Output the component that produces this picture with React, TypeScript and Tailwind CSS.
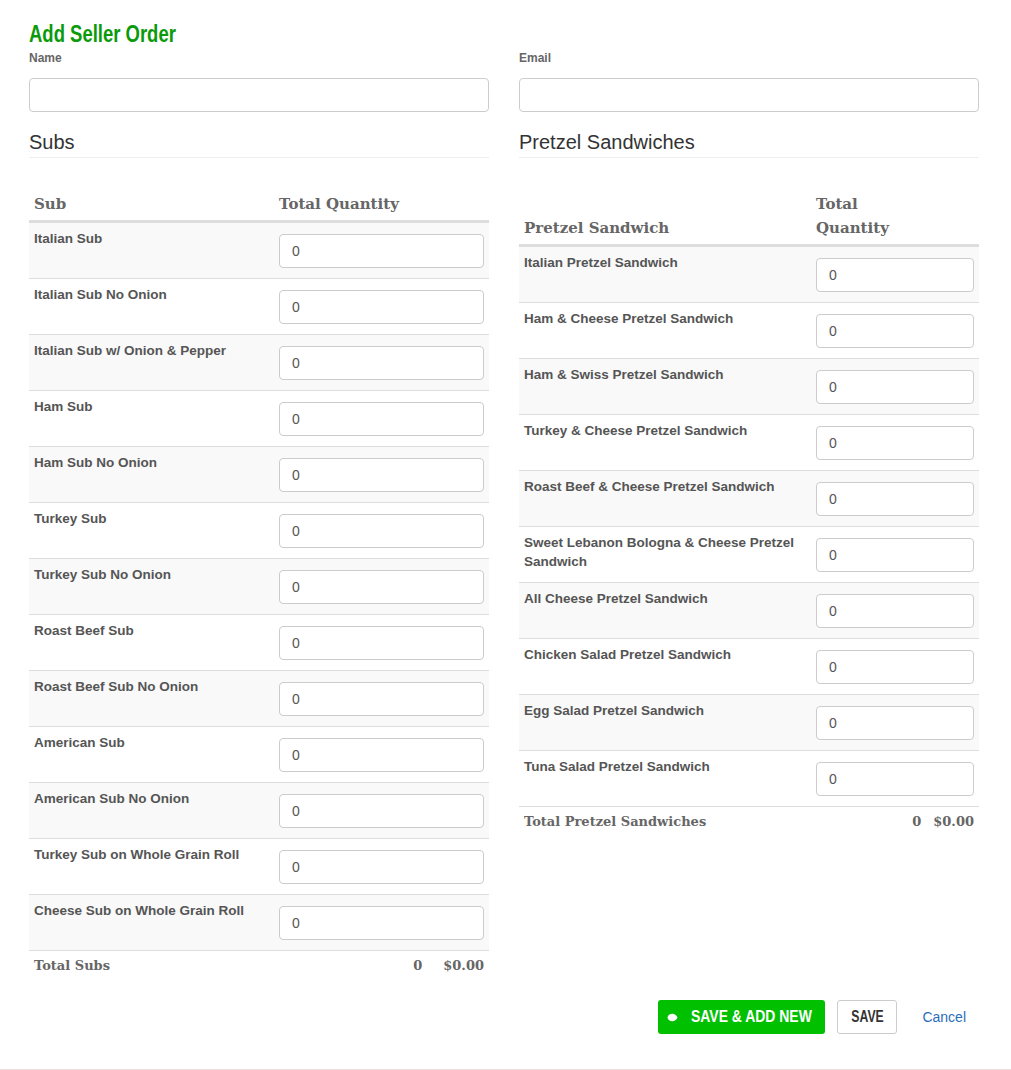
import React from 'react';

const subs = [
  'Italian Sub',
  'Italian Sub No Onion',
  'Italian Sub w/ Onion & Pepper',
  'Ham Sub',
  'Ham Sub No Onion',
  'Turkey Sub',
  'Turkey Sub No Onion',
  'Roast Beef Sub',
  'Roast Beef Sub No Onion',
  'American Sub',
  'American Sub No Onion',
  'Turkey Sub on Whole Grain Roll',
  'Cheese Sub on Whole Grain Roll',
];

const pretzels = [
  'Italian Pretzel Sandwich',
  'Ham & Cheese Pretzel Sandwich',
  'Ham & Swiss Pretzel Sandwich',
  'Turkey & Cheese Pretzel Sandwich',
  'Roast Beef & Cheese Pretzel Sandwich',
  'Sweet Lebanon Bologna & Cheese Pretzel Sandwich',
  'All Cheese Pretzel Sandwich',
  'Chicken Salad Pretzel Sandwich',
  'Egg Salad Pretzel Sandwich',
  'Tuna Salad Pretzel Sandwich',
];

const serif = 'font-["Georgia","DejaVu_Serif",serif]';

function Row({ name, odd, firstCol }: { name: string; odd: boolean; firstCol: string }) {
  return (
    <div className={`flex h-[56px] border-t border-[#ddd] ${odd ? 'bg-[#f9f9f9]' : 'bg-white'}`}>
      <div className={`${firstCol} px-[5px] pt-[6px] text-[13.5px] font-bold leading-[19px] text-[#555]`}>{name}</div>
      <div className="flex flex-1 items-center px-[5px]">
        <input
          defaultValue="0"
          className="h-[34px] w-full rounded-[4px] border border-[#ccc] bg-white px-3 text-[14px] text-[#555] outline-none"
        />
      </div>
    </div>
  );
}

function Field({ label }: { label: string }) {
  return (
    <div className="flex flex-col">
      <label className="mb-[12px] text-[12px] font-bold leading-[16px] text-[#666]">{label}</label>
      <input className="h-[34px] w-full rounded-[4px] border border-[#ccc] bg-white px-3 outline-none" />
    </div>
  );
}

export default function App() {
  return (
    <div className="min-h-[1070px] bg-white font-['Liberation_Sans',Arial,sans-serif]">
      <div className="mx-[29px] w-[950px] pt-[20px]">
        <h1 className="inline-block origin-left scale-x-[0.77] whitespace-nowrap text-[24px] font-bold leading-[28px] text-[#0a9a0a]">
          Add Seller Order
        </h1>
        <div className="mt-[1px] grid grid-cols-2 gap-[30px]">
          {/* left column */}
          <div className="flex flex-col">
            <Field label="Name" />
            <h2 className="mt-[18px] border-b border-[#eee] pb-[3px] text-[20px] leading-[24px] text-[#333]">Subs</h2>
            <div className="mt-[34px]">
              <div className={`flex items-end border-b-2 border-[#ddd] pb-[4px] ${serif} text-[15px] font-bold leading-[24px] text-[#666]`}>
                <div className="w-[245px] px-[5px]">Sub</div>
                <div className="flex-1 px-[5px]">Total Quantity</div>
              </div>
              {subs.map((s, i) => (
                <Row key={s} name={s} odd={i % 2 === 0} firstCol="w-[245px]" />
              ))}
              <div className={`flex h-[30px] items-center border-t border-[#ddd] px-[5px] ${serif} text-[13px] font-bold text-[#666]`}>
                <div className="flex-1">Total Subs</div>
                <div className="mr-[21px]">0</div>
                <div>$0.00</div>
              </div>
            </div>
          </div>

          {/* right column */}
          <div className="flex flex-col">
            <Field label="Email" />
            <h2 className="mt-[18px] border-b border-[#eee] pb-[3px] text-[20px] leading-[24px] text-[#333]">Pretzel Sandwiches</h2>
            <div className="mt-[34px]">
              <div className={`flex items-end border-b-2 border-[#ddd] pb-[4px] ${serif} text-[15px] font-bold leading-[24px] text-[#666]`}>
                <div className="w-[292px] px-[5px]">Pretzel Sandwich</div>
                <div className="flex-1 px-[5px]">
                  Total
                  <br />
                  Quantity
                </div>
              </div>
              {pretzels.map((s, i) => (
                <Row key={s} name={s} odd={i % 2 === 0} firstCol="w-[292px]" />
              ))}
              <div className={`flex h-[30px] items-center border-t border-[#ddd] px-[5px] ${serif} text-[13px] font-bold text-[#666]`}>
                <div className="flex-1">Total Pretzel Sandwiches</div>
                <div className="mr-[12px]">0</div>
                <div>$0.00</div>
              </div>
            </div>
          </div>
        </div>

        <div className="mt-[20px] flex items-center justify-end pr-[13px]">
          <button className="flex h-[34px] w-[167px] items-center overflow-visible rounded-[3px] bg-[#00c000] pl-[9px] text-white">
            <svg width="11" height="9" viewBox="0 0 11 9" className="shrink-0">
              <path d="M0.5 4.5 C1 1.5 3.5 0.5 6 0.8 C8 1 9.5 2.5 10.5 4.5 C9.5 6.5 8 8 6 8.2 C3.5 8.5 1 7.5 0.5 4.5 Z" fill="white" />
            </svg>
            <span className="ml-[13px] inline-block shrink-0 origin-left scale-x-[0.82] whitespace-nowrap text-[17px] font-bold leading-[20px]">
              SAVE &amp; ADD NEW
            </span>
          </button>
          <button className="ml-[12px] flex h-[34px] w-[60px] items-center justify-center rounded-[3px] border border-[#ccc] bg-white text-[#333]">
            <span className="inline-block scale-x-[0.72] whitespace-nowrap text-[17px] font-bold leading-[20px]">SAVE</span>
          </button>
          <a className="ml-[25px] text-[14px] text-[#2a6ebb]">Cancel</a>
        </div>
      </div>
      <div className="mt-[35px] border-b-2 border-[#f0e0dc]" />
    </div>
  );
}
